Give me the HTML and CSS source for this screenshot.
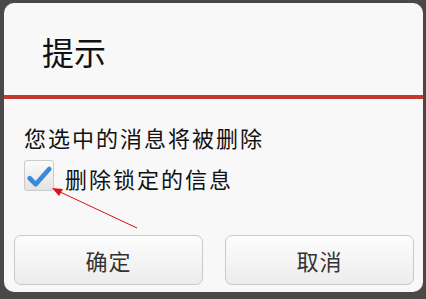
FILE: index.html
```html
<!DOCTYPE html>
<html lang="zh-CN">
<head>
    <meta charset="UTF-8">
    <meta name="viewport" content="width=device-width, initial-scale=1.0">
    <title>提示</title>
    <link rel="stylesheet" href="styles.css">
</head>
<body>
    <div class="dialog">
        <div class="dialog-title">提示</div>
        <div class="divider"></div>

        <div class="dialog-body">
            <p class="message">您选中的消息将被删除</p>
            <label class="check-row">
                <span class="checkbox">
                    <svg width="30" height="30" viewBox="0 0 30 30">
                        <path d="M5 18.5 L11.5 25 L26 8.5" fill="none" stroke="#3b8ad8" stroke-width="5" stroke-linecap="round" stroke-linejoin="round"/>
                    </svg>
                </span>
                <span class="check-label">删除锁定的信息</span>
            </label>
        </div>

        <div class="dialog-buttons">
            <button class="btn">确定</button>
            <button class="btn">取消</button>
        </div>

        <!-- annotation arrow pointing at the checkbox -->
        <svg class="arrow" width="426" height="299" viewBox="0 0 426 299">
            <line x1="137" y1="228" x2="58" y2="191" stroke="#d4101a" stroke-width="1"/>
            <polygon points="52,188 63,189 59,196" fill="#e0101a"/>
        </svg>
    </div>
</body>
</html>
```

FILE: styles.css
```css
* {
    box-sizing: border-box;
    margin: 0;
    padding: 0;
}
body {
    font-family: "Noto Sans CJK SC", "Noto Sans", sans-serif;
    background-color: #4a4947;
    width: 426px;
    height: 299px;
    overflow: hidden;
}
.dialog {
    position: relative;
    margin: 3px 4px;
    width: 419px;
    height: 289px;
    background-color: #f8f8f8;
    border-radius: 10px;
    display: flex;
    flex-direction: column;
}
.dialog-title {
    height: 92px;
    padding: 5px 0 0 38px;
    font-size: 32px;
    line-height: 86px;
    color: #111;
}
.divider {
    height: 4px;
    background-color: #c23a2d;
}
.dialog-body {
    padding: 0 20px;
    color: #111;
    font-size: 22px;
    letter-spacing: 2px;
}
.message {
    margin-top: 23px;
    line-height: 30px;
}
.check-row {
    display: flex;
    align-items: center;
    margin-top: 6px;
    height: 34px;
}
.checkbox {
    width: 30px;
    height: 31px;
    border: 1px solid #cbcbcb;
    border-radius: 3px;
    background: linear-gradient(#fbfbfb, #e4e4e4);
    display: flex;
    align-items: center;
    justify-content: center;
}
.check-label {
    margin-left: 11px;
    padding-top: 6px;
    line-height: 30px;
}
.dialog-buttons {
    display: flex;
    gap: 22px;
    margin-top: auto;
    padding: 0 9px 7px 10px;
}
.btn {
    flex: 1;
    height: 50px;
    border: 1px solid #c9c9c9;
    border-radius: 7px;
    background: linear-gradient(#fdfdfd, #ececec);
    font-family: inherit;
    font-size: 22px;
    color: #333;
    letter-spacing: 1px;
}
.arrow {
    position: absolute;
    left: -4px;
    top: -3px;
    pointer-events: none;
}
```
